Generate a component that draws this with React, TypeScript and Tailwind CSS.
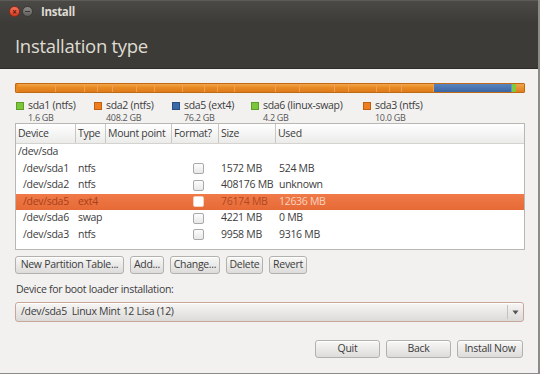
import React from "react";

const F = { fontFamily: '"Open Sans", "DejaVu Sans", sans-serif' };

function Check({ sel }: { sel?: boolean }) {
  return (
    <div
      className={
        sel
          ? "w-[11px] h-[11px] rounded-[2px] bg-white border border-[#f3d2c2]"
          : "w-[11px] h-[11px] rounded-[2px] bg-gradient-to-b from-[#fdfdfd] to-[#e8e8e8] border border-[#a9a9a9]"
      }
    />
  );
}

function Btn({ children, w }: { children: React.ReactNode; w: string }) {
  return (
    <div
      className={`${w} h-[18px] flex items-center justify-center rounded-[3px] border border-[#b3b1ae] bg-gradient-to-b from-[#f8f8f7] to-[#dddcda] text-[10.5px] tracking-[-0.3px] text-[#3c3c3c] shadow-[inset_0_1px_0_#ffffff] whitespace-nowrap`}
    >
      {children}
    </div>
  );
}

type Row = { dev: string; type: string; size: string; used: string; sel?: boolean };
const rows: Row[] = [
  { dev: "/dev/sda1", type: "ntfs", size: "1572 MB", used: "524 MB" },
  { dev: "/dev/sda2", type: "ntfs", size: "408176 MB", used: "unknown" },
  { dev: "/dev/sda5", type: "ext4", size: "76174 MB", used: "12636 MB", sel: true },
  { dev: "/dev/sda6", type: "swap", size: "4221 MB", used: "0 MB" },
  { dev: "/dev/sda3", type: "ntfs", size: "9958 MB", used: "9316 MB" },
];

const legend = [
  { name: "sda1 (ntfs)", size: "1.6 GB", c: "bg-[#7cc63a]", b: "border-[#5e9e25]", w: "w-[78px]" },
  { name: "sda2 (ntfs)", size: "408.2 GB", c: "bg-[#ee7d1f]", b: "border-[#c0600e]", w: "w-[78px]" },
  { name: "sda5 (ext4)", size: "76.2 GB", c: "bg-[#3c68a8]", b: "border-[#284d85]", w: "w-[79px]" },
  { name: "sda6 (linux-swap)", size: "4.2 GB", c: "bg-[#7cc63a]", b: "border-[#5e9e25]", w: "w-[112px]" },
  { name: "sda3 (ntfs)", size: "10.0 GB", c: "bg-[#ee7d1f]", b: "border-[#c0600e]", w: "w-[80px]" },
];

export default function App() {
  return (
    <div
      style={F}
      className="w-[540px] h-[374px] bg-[#f2f1f0] flex flex-col border-r-[2px] border-b border-[#8d8b88] overflow-hidden whitespace-nowrap tracking-[-0.3px]"
    >
      {/* title bar */}
      <div className="h-[22px] bg-gradient-to-b from-[#4a4945] to-[#3d3c38] border-t border-[#5c5b57] flex items-center pl-[9px]">
        <div className="w-[11px] h-[11px] rounded-full bg-gradient-to-b from-[#f3735a] to-[#d3371b] border border-[#8e2a17] flex items-center justify-center text-[8px] leading-none text-[#5a1a0c] font-bold">
          ×
        </div>
        <div className="ml-[2px] w-[11px] h-[11px] rounded-full bg-gradient-to-b from-[#8e8d89] to-[#5f5e5a] border border-[#3a3936] flex items-center justify-center">
          <div className="w-[5px] h-[1.5px] bg-[#3a3936]" />
        </div>
        <div className="ml-[8px] text-[11.5px] font-bold text-[#dfdbd2]">Install</div>
      </div>
      {/* header */}
      <div className="h-[47px] bg-[#3c3b37] flex items-center pl-[15px] border-b border-[#2d2c29]">
        <div className="text-[18.5px] text-[#dfdbd2] tracking-[-0.3px] mt-[1px]">Installation type</div>
      </div>

      <div className="flex flex-col px-[15px] pt-[14px]">
        {/* partition bar */}
        <div className="h-[10px] w-[510px] flex rounded-[1px] border border-[#c06a14] overflow-hidden">
          <div className="w-[2px] bg-[#e8881f]" />
          <div
            className="w-[416px] bg-[#e8881f]"
            style={{
              backgroundImage:
                "linear-gradient(to bottom, #f2a64c 0%, #e98a22 45%, #dc7a1b 100%)",
            }}
          >
            <div className="flex h-full">
              {[38, 29, 13, 15, 24, 18, 28, 22, 13, 17, 41, 24, 35, 14, 28, 13, 12, 32].map((w, i) => (
                <div key={i} style={{ width: w }} className="h-full border-r border-[#eea04e]" />
              ))}
            </div>
          </div>
          <div className="w-[78px] bg-gradient-to-b from-[#5a84bf] to-[#3b66a4] border-r border-[#6e91c4]" />
          <div className="w-[4px] bg-[#7fc93c]" />
          <div className="flex-1 bg-gradient-to-b from-[#f0a44a] to-[#e07e1d]" />
        </div>

        {/* legend */}
        <div className="flex h-[30px] pt-[6px] pl-[1px]">
          {legend.map((l) => (
            <div key={l.name} className={`${l.w} flex shrink-0`}>
              <div className={`w-[8px] h-[8px] mt-[3px] border ${l.c} ${l.b}`} />
              <div className="ml-[4px] flex flex-col">
                <div className="text-[10.5px] leading-[13px] text-[#3c3c3c]">{l.name}</div>
                <div className="text-[9px] leading-[12px] text-[#555]">{l.size}</div>
              </div>
            </div>
          ))}
        </div>

        {/* table */}
        <div className="h-[127px] w-[510px] border border-[#b9b7b4] bg-white flex flex-col text-[10.5px] text-[#3c3c3c]">
          <div className="h-[20px] flex items-center bg-gradient-to-b from-[#ffffff] to-[#ebebea] border-b border-[#d5d3d0]">
            <div className="w-[60px] h-full flex items-center pl-[2px] border-r border-[#c9c7c4]">Device</div>
            <div className="w-[30px] h-full flex items-center pl-[2px] border-r border-[#c9c7c4]">Type</div>
            <div className="w-[66px] h-full flex items-center pl-[2px] border-r border-[#c9c7c4]">Mount point</div>
            <div className="w-[47px] h-full flex items-center pl-[2px] border-r border-[#c9c7c4]">Format?</div>
            <div className="w-[57px] h-full flex items-center pl-[2px] border-r border-[#c9c7c4]">Size</div>
            <div className="flex-1 h-full flex items-center pl-[2px]">Used</div>
          </div>
          <div className="h-[16.5px] flex items-center pl-[2px]">/dev/sda</div>
          {rows.map((r) => (
            <div
              key={r.dev}
              className={
                r.sel
                  ? "h-[16.5px] flex items-center bg-gradient-to-b from-[#f07a48] to-[#e66a36] text-[#a8401c]"
                  : "h-[16.5px] flex items-center"
              }
            >
              <div className="w-[60px] shrink-0 pl-[7px]">{r.dev}</div>
              <div className="w-[30px] shrink-0 pl-[2px]">{r.type}</div>
              <div className="w-[66px] shrink-0" />
              <div className="w-[47px] shrink-0 flex justify-center pl-[6px]">
                <Check sel={r.sel} />
              </div>
              <div className={r.sel ? "w-[57px] shrink-0 pl-[2px] text-[#b04822]" : "w-[57px] shrink-0 pl-[2px]"}>{r.size}</div>
              <div className={r.sel ? "flex-1 pl-[3px] text-[#fbd3c0]" : "flex-1 pl-[3px]"}>{r.used}</div>
            </div>
          ))}
        </div>

        {/* buttons */}
        <div className="flex gap-[6px] mt-[6px]">
          <Btn w="w-[109px]">New Partition Table...</Btn>
          <Btn w="w-[34px]">Add...</Btn>
          <Btn w="w-[50px]">Change...</Btn>
          <Btn w="w-[37px]">Delete</Btn>
          <Btn w="w-[38px]">Revert</Btn>
        </div>

        <div className="mt-[8px] text-[10.5px] text-[#3c3c3c] pl-[1px] h-[15px] leading-[15px]">
          Device for boot loader installation:
        </div>

        <div className="mt-[5px] w-[509px] h-[20px] flex items-center rounded-[3px] border border-[#c7a79a] bg-gradient-to-b from-[#f7f6f5] to-[#dcdbd9] text-[10.5px] text-[#3c3c3c] shadow-[inset_0_1px_0_#ffffff]">
          <div className="flex-1 pl-[5px]">/dev/sda5&nbsp; Linux Mint 12 Lisa (12)</div>
          <div className="w-px h-[14px] bg-[#c4c2bf]" />
          <div className="w-[15px] flex justify-center">
            <svg width="7" height="5" viewBox="0 0 7 5">
              <path d="M0.5 0.5 L6.5 0.5 L3.5 4.5 Z" fill="#555" />
            </svg>
          </div>
        </div>

        <div className="flex justify-end gap-[6px] mt-[18px]">
          <Btn w="w-[65px]">Quit</Btn>
          <Btn w="w-[65px]">Back</Btn>
          <Btn w="w-[66px]">Install Now</Btn>
        </div>
      </div>
    </div>
  );
}
